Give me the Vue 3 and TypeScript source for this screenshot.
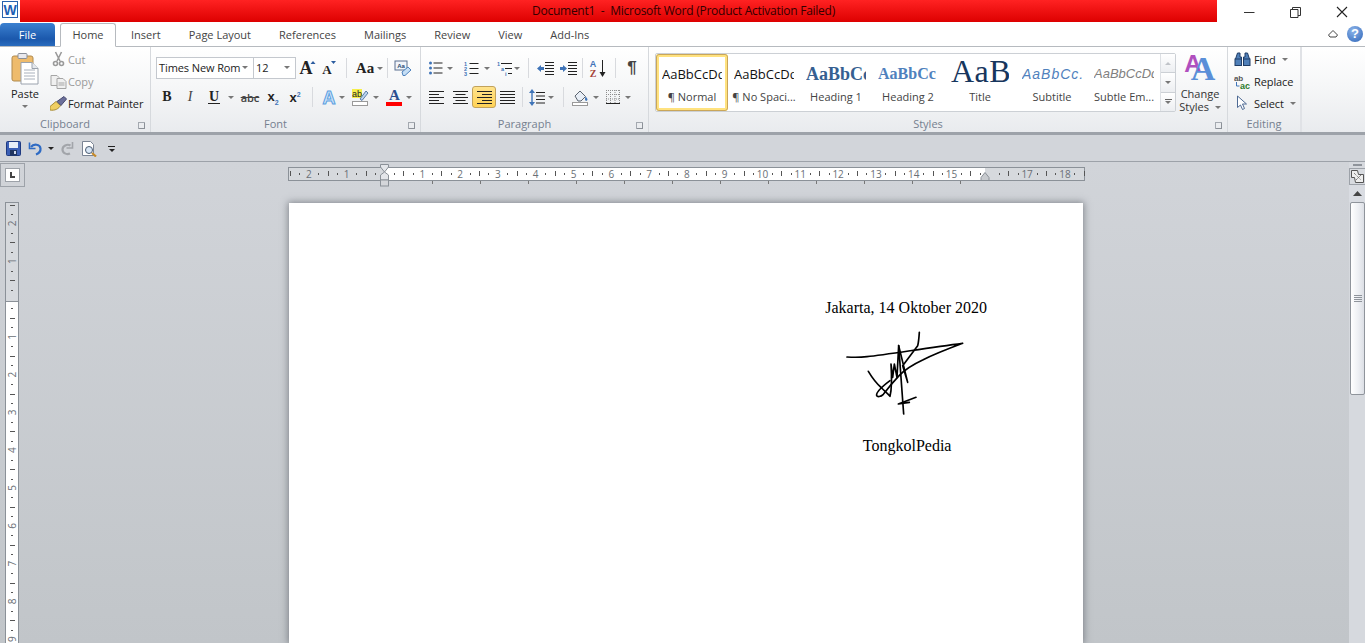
<script setup lang="ts">
// Word 2010 window: title bar, ribbon, quick access bar, rulers and the page.
const tabs = ['Insert', 'Page Layout', 'References', 'Mailings', 'Review', 'View', 'Add-Ins'];

const CM = 37.8;
const hLabels = [-2, -1, 1, 2, 3, 4, 5, 6, 7, 8, 9, 10, 11, 12, 13, 14, 15, 17, 18];
const vLabels = [-2, -1, 1, 2, 3, 4, 5, 6, 7, 8, 9];

// every quarter of a cm gets a dot, every half a longer tick
const hTicks: { x: number; long: boolean }[] = [];
for (let i = -10; i <= 74; i++) {
    if (i % 4 === 0) continue;
    hTicks.push({ x: 96.5 + (i * CM) / 4, long: i % 2 === 0 });
}
const vTicks: { y: number; long: boolean }[] = [];
for (let i = -10; i <= 38; i++) {
    if (i % 4 === 0) continue;
    vTicks.push({ y: 97 + (i * CM) / 4, long: i % 2 === 0 });
}
const tabStops = Array.from({ length: 12 }, (_, i) => 96 + 48 * (i + 1));

const gallery = [
    { cls: 'normal', sample: 'AaBbCcDd', name: '¶ Normal' },
    { cls: 'normal', sample: 'AaBbCcDd', name: '¶ No Spaci...' },
    { cls: 'h1', sample: 'AaBbCc', name: 'Heading 1' },
    { cls: 'h2', sample: 'AaBbCc', name: 'Heading 2' },
    { cls: 'title', sample: 'AaB', name: 'Title' },
    { cls: 'subtitle', sample: 'AaBbCc.', name: 'Subtitle' },
    { cls: 'subtle', sample: 'AaBbCcDd', name: 'Subtle Em...' },
];
</script>

<template>
    <div class="word">
        <header class="titlebar">
            <div class="app-icon">
                <svg width="18" height="20" viewBox="0 0 18 20">
                    <rect x="1.500" y="1.500" width="15" height="16" fill="#fff" stroke="#2a63ad" />
                    <text x="9" y="15" text-anchor="middle" class="w-glyph">W</text>
                </svg>
            </div>
            <div class="title-red">Document1&nbsp; - &nbsp;Microsoft Word (Product Activation Failed)</div>
            <div class="win-controls">
                <svg width="11" height="11" viewBox="0 0 11 11"><path d="M0 5.500h10.500" stroke="#333" /></svg>
                <svg width="11" height="11" viewBox="0 0 11 11" fill="none" stroke="#333"><path d="M.5 2.500h7.500v8H.5zM2.500 2.500v-2h8v8H8" /></svg>
                <svg width="12" height="12" viewBox="0 0 12 12"><path d="M1 1l10 10M11 1L1 11" stroke="#222" stroke-width="1.100" /></svg>
            </div>
        </header>

        <nav class="tabs">
            <div class="tab-file">File</div>
            <div class="tab-home">Home</div>
            <div v-for="t in tabs" :key="t" class="tab">{{ t }}</div>
            <div class="tab-right">
                <svg width="12" height="10" viewBox="0 0 12 10" fill="none" stroke="#444"><path d="M1.500 6L6 1.500 10.500 6 9 8H3z" /></svg>
                <div class="help">?</div>
            </div>
        </nav>

        <section class="ribbon">
            <!-- Clipboard -->
            <div class="group g-clip">
                <div class="clip-body">
                    <div class="paste">
                        <svg width="28" height="33" viewBox="0 0 28 33">
                            <rect x="1" y="4" width="21" height="25" rx="2" fill="#eebb6c" stroke="#b08a4e" />
                            <rect x="7" y="1.500" width="9" height="5" rx="1" fill="#e9e9ee" stroke="#8a8f99" />
                            <path d="M10 10.500h11l6 6v15.500H10z" fill="#fff" stroke="#9aa2ad" />
                            <path d="M21 10.500v6h6" fill="#e4e8ee" stroke="#9aa2ad" />
                            <path d="M13 18h11M13 21h11M13 24h11M13 27h11" stroke="#a8b0bc" />
                        </svg>
                        <span class="paste-label">Paste</span>
                        <i class="caret small"></i>
                    </div>
                    <div class="clip-list">
                        <div class="clip-row off">
                            <svg width="14" height="16" viewBox="0 0 14 16" fill="none" stroke="#9a9a9a" stroke-width="1.600"><path d="M4 1l4.500 9M10 1L5.500 10" /><circle cx="4" cy="12.500" r="2" /><circle cx="10" cy="12.500" r="2" /></svg>
                            <span>Cut</span>
                        </div>
                        <div class="clip-row off">
                            <svg width="16" height="15" viewBox="0 0 16 15" fill="#f0f0f0" stroke="#a5a5a5"><path d="M.5 1.500h6l2 2v8h-8z" /><path d="M6.500 4.500h6l3 3v7h-9z" /><path d="M8 9h6M8 11h6" /></svg>
                            <span>Copy</span>
                        </div>
                        <div class="clip-row">
                            <svg width="17" height="15" viewBox="0 0 17 15">
                                <path d="M0 10.500l6-5 4.500 4C9 12.500 5 15 0 14z" fill="#f0cf62" stroke="#a98d35" />
                                <path d="M7 5.500l7-5 2.500 2.500-5.500 6.500z" fill="#6b6f9a" stroke="#45486e" />
                            </svg>
                            <span>Format Painter</span>
                        </div>
                    </div>
                </div>
                <div class="group-label">Clipboard</div>
                <i class="launcher"></i>
            </div>

            <!-- Font -->
            <div class="group g-font">
                <div class="rows">
                    <div class="row">
                        <div class="combo w97"><span>Times New Rom</span><i class="caret"></i></div>
                        <div class="combo w43"><span>12</span><i class="caret"></i></div>
                        <div class="t w20 ml2">
                            <svg width="18" height="18" viewBox="0 0 18 18"><text x="7" y="15" text-anchor="middle" class="serif-b s17">A</text><path d="M11.500 5l2.500-3 2.500 3z" fill="#2b5c9f" /></svg>
                        </div>
                        <div class="t w20 ml1">
                            <svg width="18" height="18" viewBox="0 0 18 18"><text x="7" y="15" text-anchor="middle" class="serif-b s13">A</text><path d="M11 2h5l-2.500 3z" fill="#2b5c9f" /></svg>
                        </div>
                        <i class="sep ml7"></i>
                        <div class="t w20 ml8"><span class="serif-b aa">Aa</span></div>
                        <div class="t w10"><i class="caret"></i></div>
                        <i class="sep ml2"></i>
                        <div class="t w20 ml5">
                            <svg width="18" height="17" viewBox="0 0 18 17">
                                <rect x="1" y="1" width="12" height="9" fill="#f2f5fa" stroke="#5a6f8f" />
                                <text x="7" y="8" text-anchor="middle" class="mini-b">Aa</text>
                                <path d="M8 12l6-5 3 3-6 5.500H9z" fill="#c5def5" stroke="#4e82bd" />
                            </svg>
                        </div>
                    </div>
                    <div class="row">
                        <div class="t w22"><span class="serif-b fmt">B</span></div>
                        <div class="t w22 ml1"><span class="serif-i fmt">I</span></div>
                        <div class="t w22 ml2"><span class="serif-b fmt under">U</span></div>
                        <div class="t w12"><i class="caret"></i></div>
                        <div class="t w22 ml2"><span class="strike">abc</span></div>
                        <div class="t w22 ml1"><span class="script">x<sub>2</sub></span></div>
                        <div class="t w22"><span class="script">x<sup>2</sup></span></div>
                        <i class="sep ml6"></i>
                        <div class="t w18 ml7">
                            <svg width="18" height="18" viewBox="0 0 18 18"><text x="9" y="16" text-anchor="middle" class="glow">A</text></svg>
                        </div>
                        <div class="t w7"><i class="caret"></i></div>
                        <div class="t w18 ml6">
                            <svg width="17" height="18" viewBox="0 0 17 18">
                                <rect x="0" y="1" width="10" height="9" fill="#f5ee4a" />
                                <text x="5" y="9" text-anchor="middle" class="mini-ab">ab</text>
                                <path d="M8 11l6-8 2 2-6 7.500z" fill="#bcd4ef" stroke="#5a7ca8" />
                                <rect x=".5" y="13.500" width="15" height="4" fill="#fff" stroke="#9a9a9a" />
                            </svg>
                        </div>
                        <div class="t w14"><i class="caret"></i></div>
                        <div class="t w18 ml2">
                            <svg width="17" height="18" viewBox="0 0 17 18">
                                <text x="8.500" y="12" text-anchor="middle" class="blue-a">A</text>
                                <rect x="0" y="14" width="16" height="4" fill="#f00" />
                            </svg>
                        </div>
                        <div class="t w12"><i class="caret"></i></div>
                    </div>
                </div>
                <div class="group-label">Font</div>
                <i class="launcher"></i>
            </div>

            <!-- Paragraph -->
            <div class="group g-para">
                <div class="rows">
                    <div class="row">
                        <div class="t w22 ml4">
                            <svg width="14" height="14" viewBox="0 0 14 14"><path d="M4.500 2h9M4.500 7h9M4.500 12h9" stroke="#222" /><g fill="#3f74b8"><circle cx="1.500" cy="2" r="1.500" /><circle cx="1.500" cy="7" r="1.500" /><circle cx="1.500" cy="12" r="1.500" /></g></svg>
                        </div>
                        <div class="t w6"><i class="caret"></i></div>
                        <div class="t w22 ml7">
                            <svg width="15" height="15" viewBox="0 0 15 15"><path d="M5.500 2.500h9M5.500 7.500h9M5.500 12.500h9" stroke="#222" /><g class="mini-n"><text x="0" y="5">1</text><text x="0" y="10">2</text><text x="0" y="15">3</text></g></svg>
                        </div>
                        <div class="t w10"><i class="caret"></i></div>
                        <div class="t w18 ml4">
                            <svg width="16" height="15" viewBox="0 0 16 15"><path d="M4 2.500h11M8 7.500h7M11 12.500h4" stroke="#222" /><g class="mini-n"><text x="0" y="5">1</text><text x="4" y="10">a</text><text x="8" y="15">i</text></g></svg>
                        </div>
                        <div class="t w6"><i class="caret"></i></div>
                        <i class="sep ml8"></i>
                        <div class="t w20 ml6">
                            <svg width="17" height="15" viewBox="0 0 17 15"><path d="M8 1.500h9M8 4.500h9M8 7.500h9M8 10.500h9M8 13.500h9" stroke="#222" /><path d="M0 7.500l4-3.500v2h3v3H4v2z" fill="#3f74b8" /></svg>
                        </div>
                        <div class="t w20 ml3">
                            <svg width="17" height="15" viewBox="0 0 17 15"><path d="M8 1.500h9M8 4.500h9M8 7.500h9M8 10.500h9M8 13.500h9" stroke="#222" /><path d="M7 7.500L3 4v2H0v3h3v2z" fill="#3f74b8" /></svg>
                        </div>
                        <i class="sep ml4"></i>
                        <div class="t w22 ml4">
                            <svg width="20" height="19" viewBox="0 0 20 19"><text x="5" y="8" text-anchor="middle" class="az-a">A</text><text x="5" y="18" text-anchor="middle" class="az-z">Z</text><path d="M14.500 1v14" stroke="#222" /><path d="M11.500 13h6l-3 5z" fill="#222" /></svg>
                        </div>
                        <i class="sep ml6"></i>
                        <div class="t w22 ml5"><span class="pilcrow">¶</span></div>
                    </div>
                    <div class="row">
                        <div class="t w23 ml4"><svg width="15" height="13" viewBox="0 0 15 13"><path d="M0 .5h15M0 3.500h10M0 6.500h15M0 9.500h10M0 12.500h15" stroke="#222" /></svg></div>
                        <div class="t w23 ml1"><svg width="15" height="13" viewBox="0 0 15 13"><path d="M0 .5h15M2.500 3.500h10M0 6.500h15M2.500 9.500h10M0 12.500h15" stroke="#222" /></svg></div>
                        <div class="t w24 on"><svg width="15" height="13" viewBox="0 0 15 13"><path d="M0 .5h15M5 3.500h10M0 6.500h15M5 9.500h10M0 12.500h15" stroke="#222" /></svg></div>
                        <div class="t w23"><svg width="15" height="13" viewBox="0 0 15 13"><path d="M0 .5h15M0 3.500h15M0 6.500h15M0 9.500h15M0 12.500h15" stroke="#222" /></svg></div>
                        <i class="sep ml3"></i>
                        <div class="t w20 ml4">
                            <svg width="16" height="17" viewBox="0 0 16 17"><path d="M7 3.500h9M7 7h9M7 10.500h9M7 14h9" stroke="#222" /><path d="M3 0l3 4H0zM3 17l3-4H0z M2.300 4h1.400v9H2.300z" fill="#3f74b8" /></svg>
                        </div>
                        <div class="t w8"><i class="caret"></i></div>
                        <i class="sep ml8"></i>
                        <div class="t w22 ml5">
                            <svg width="17" height="17" viewBox="0 0 17 17">
                                <path d="M3 7l5-5 5.500 5.500-4.500 4.500H6z" fill="#e8eef6" stroke="#5b6470" />
                                <path d="M13.500 7.500c2 2 2.500 3 1.500 4s-2 0-2-1.500z" fill="#3f74b8" />
                                <rect x=".5" y="13.500" width="15" height="3" fill="#fff" stroke="#9a9a9a" />
                            </svg>
                        </div>
                        <div class="t w10"><i class="caret"></i></div>
                        <div class="t w20 ml2">
                            <svg width="14" height="14" viewBox="0 0 14 14"><path d="M.5 0v13M4.500 0v13M9 0v13M13.500 0v13M0 .5h14M0 4.500h14M0 9h14" stroke="#8d8d8d" stroke-dasharray="1 1" fill="none" /><path d="M0 13.500h14" stroke="#222" /></svg>
                        </div>
                        <div class="t w10"><i class="caret"></i></div>
                    </div>
                </div>
                <div class="group-label">Paragraph</div>
                <i class="launcher"></i>
            </div>

            <!-- Styles -->
            <div class="group g-styles">
                <div class="styles-body">
                    <div class="gallery">
                        <div v-for="(s, i) in gallery" :key="s.name" class="style-item" :class="{ selected: i === 0 }">
                            <div class="sample" :class="s.cls"><span>{{ s.sample }}</span></div>
                            <div class="style-name">{{ s.name }}</div>
                        </div>
                        <div class="gallery-scroll">
                            <div class="gs-btn"><i class="caret up dim"></i></div>
                            <div class="gs-btn"><i class="caret"></i></div>
                            <div class="gs-btn more"><b></b><i class="caret"></i></div>
                        </div>
                    </div>
                    <div class="change-styles">
                        <svg width="32" height="30" viewBox="0 0 32 30">
                            <text x="9" y="20" text-anchor="middle" class="cs-back">A</text>
                            <text x="19" y="28" text-anchor="middle" class="cs-front">A</text>
                        </svg>
                        <span>Change</span>
                        <span>Styles <i class="caret inline"></i></span>
                    </div>
                </div>
                <div class="group-label">Styles</div>
                <i class="launcher"></i>
            </div>

            <!-- Editing -->
            <div class="group g-edit">
                <div class="edit-list">
                    <div class="clip-row">
                        <svg width="16" height="14" viewBox="0 0 16 14" fill="#4f7fb8" stroke="#1f3d66"><path d="M1 7l2-6h2.500v4H7V7.500H1zM15 7l-2-6h-2.500v4H9V7.500h6z" /><rect x=".5" y="7" width="6.500" height="6.500" /><rect x="9" y="7" width="6.500" height="6.500" /></svg>
                        <span>Find</span><i class="caret inline"></i>
                    </div>
                    <div class="clip-row">
                        <svg width="17" height="15" viewBox="0 0 17 15"><text x="0" y="6.500" class="rep-a">ab</text><text x="6" y="14.500" class="rep-b">ac</text><path d="M2.500 8v4h3" fill="none" stroke="#3f74b8" /></svg>
                        <span>Replace</span>
                    </div>
                    <div class="clip-row">
                        <svg width="14" height="16" viewBox="0 0 14 16"><path d="M2 1v11.500l3-2.500 2 4.500 2-1-2-4.500h4z" fill="#fff" stroke="#4e6a94" /></svg>
                        <span>Select</span><i class="caret inline"></i>
                    </div>
                </div>
                <div class="group-label plain">Editing</div>
            </div>
        </section>

        <div class="qat">
            <svg width="15" height="15" viewBox="0 0 15 15">
                <rect x=".5" y=".5" width="14" height="14" rx="1" fill="#3b5fb5" stroke="#1f3a80" />
                <rect x="3" y="1" width="9" height="6" fill="#e8eef8" />
                <rect x="4" y="9" width="7" height="5.500" fill="#20345f" />
                <rect x="8" y="10" width="2" height="3" fill="#cfd8ea" />
            </svg>
            <svg class="q-undo" width="15" height="15" viewBox="0 0 15 15" fill="none" stroke="#2f6bc4" stroke-width="2.200"><path d="M3 6c2.500-3.500 9-3 9.500 1.500.3 3-2 5-4.500 6" /><path d="M1.500 1.500v6h6" stroke-width="1.600" /></svg>
            <i class="caret dark q-caret1"></i>
            <svg class="q-redo" width="13" height="15" viewBox="0 0 13 15" fill="none" stroke="#a2a5aa" stroke-width="2.200"><path d="M9.500 4.500C6 2.500 1.500 5 1.500 8.500s4 5.500 7.500 4" /><path d="M11.500 1v6h-6" stroke-width="1.600" /></svg>
            <svg class="q-prev" width="16" height="16" viewBox="0 0 16 16">
                <path d="M.5.500h8l3 3v11H.5z" fill="#fff" stroke="#7a8494" />
                <circle cx="7" cy="9" r="3.500" fill="#d8e6f5" stroke="#4a5a70" />
                <path d="M10 12l4 3.500" stroke="#c58a2a" stroke-width="2.200" />
            </svg>
            <span class="q-custom"><b></b><i class="caret dark"></i></span>
        </div>

        <main class="workspace">
            <div class="doc-area">
                <div class="ruler-row">
                    <div class="tab-stop">
                        <div class="tab-stop-in"><b></b></div>
                    </div>
                    <svg class="h-ruler" width="800" height="24" viewBox="0 0 800 24">
                        <rect x=".5" y="4.500" width="796" height="13" fill="#d6d9dd" stroke="#8b9198" />
                        <rect x="97" y="5" width="600" height="12" fill="#fff" />
                        <g fill="#555">
                            <rect v-for="t in hTicks" :key="t.x" :x="Math.round(t.x)" :y="t.long ? 8 : 10" width="1" :height="t.long ? 5 : 2" />
                        </g>
                        <text v-for="n in hLabels" :key="n" class="r-num" :x="96.5 + n * CM" y="14.500" text-anchor="middle">{{ Math.abs(n) }}</text>
                        <rect v-for="x in tabStops" :key="x" :x="x" y="18" width="1" height="3" fill="#777" />
                        <path d="M92.500 1.500h8V4l-4 5-4-5z" fill="#e4e6ea" stroke="#8b9198" />
                        <path d="M92.500 17v-5l4-3 4 3v5z" fill="#e4e6ea" stroke="#8b9198" />
                        <rect x="92.500" y="17" width="8" height="6" fill="#d4d6da" stroke="#8b9198" />
                        <path d="M693 17.500v-3l4-5 4 5v3z" fill="#c8cbcf" stroke="#8b9198" />
                    </svg>
                </div>
                <div class="doc-row">
                    <svg class="v-ruler" width="14" height="441" viewBox="0 0 14 441">
                        <rect x=".5" y=".5" width="13" height="445" fill="#fff" stroke="#8b9198" />
                        <rect x="1" y="1" width="12" height="98" fill="#d6d9dd" />
                        <path d="M0 99.500h14" stroke="#8b9198" />
                        <g fill="#555">
                            <rect v-for="t in vTicks" :key="t.y" :x="t.long ? 5 : 6" :y="Math.round(t.y)" :width="t.long ? 5 : 2" height="1" />
                        </g>
                        <text v-for="n in vLabels" :key="n" class="r-num" text-anchor="middle" :transform="`translate(10.500 ${97 + n * CM}) rotate(-90)`">{{ Math.abs(n) }}</text>
                    </svg>
                    <article class="page">
                        <div class="letter-end">
                            <p>Jakarta, 14 Oktober 2020</p>
                            <svg class="signature" width="130" height="90" viewBox="90 114 390 270" fill="none" stroke="#000" stroke-width="5" stroke-linecap="round" stroke-linejoin="round">
                                <path d="M108 204c20 1 40 1 60-1 60-6 170-25 287-40-40 15-80 30-120 50-30 14-52 28-70 46-18 19-35 40-48 57-8 8-18 8-20 4-2-8 12-24 40-45" />
                                <path d="M172 247c12 20 26 38 40 50 10 10 20 18 25 25 5-20 6-50 3-97l5 40 5-40 8 40 5-95 15 205" />
                                <path d="M263 170l27 110-15-50 45-60c3-10 4-25 5-40" />
                                <path d="M262 345l53-20M262 345l33-5" />
                            </svg>
                            <p class="signer">TongkolPedia</p>
                        </div>
                    </article>
                </div>
            </div>
            <aside class="vscroll">
                <div class="split"><b></b></div>
                <div class="view-btn">
                    <svg width="13" height="13" viewBox="0 0 13 13" fill="#eee" stroke="#555"><path d="M.5.500h6l1 4h5v8h-8l-1-5h-3z" /><path d="M3 3l7 7M10 5L5 10" stroke-dasharray="1 1" /></svg>
                </div>
                <div class="sb-up"><svg width="9" height="5" viewBox="0 0 9 5"><path d="M0 5l4.500-5L9 5z" fill="#444" /></svg></div>
                <div class="thumb"><b></b><b></b><b></b><b></b></div>
            </aside>
        </main>
    </div>
</template>

<style>
html, body { margin: 0; overflow: hidden; }
</style>

<style scoped>
.word {
    width: 1365px;
    height: 643px;
    overflow: hidden;
    display: flex;
    flex-direction: column;
    font-family: "Open Sans", "Noto Sans", sans-serif;
    font-size: 11px;
    color: #333;
    background: #fff;
}

/* title bar */
.titlebar { display: flex; height: 22px; flex: none; }
.app-icon { width: 20px; padding-left: 1px; box-sizing: border-box; }
.w-glyph { font: bold 14px "Liberation Sans", sans-serif; fill: #1e5fb4; }
.title-red {
    width: 1197px;
    box-sizing: border-box;
    padding-left: 130px;
    background: linear-gradient(#ff2222, #dd0000);
    text-align: center;
    line-height: 21px;
    font-size: 12px;
    letter-spacing: -0.25px;
    color: #300;
}
.win-controls { flex: 1; display: flex; align-items: center; gap: 35px; padding: 0 0 0 27px; height: 24px; }

/* tabs */
.tabs { display: flex; height: 24px; flex: none; border-bottom: 1px solid #b6babf; box-sizing: content-box; }
.tab-file {
    width: 55px;
    height: 23px;
    margin-top: 1px;
    border-radius: 4px 4px 0 0;
    background: linear-gradient(#3b80d0, #1b58ac 70%, #2a6cbe);
    color: #fff;
    text-align: center;
    line-height: 23px;
}
.tab-home {
    width: 56px;
    height: 24px;
    margin: 1px 1px 0 5px;
    box-sizing: border-box;
    background: #fff;
    border: 1px solid #b6babf;
    border-bottom: 1px solid #fff;
    border-radius: 3px 3px 0 0;
    text-align: center;
    line-height: 22px;
    color: #444;
}
.tab { padding: 0 14px; line-height: 25px; color: #444; white-space: nowrap; }
.tab-right { margin-left: auto; display: flex; align-items: center; gap: 8px; padding-right: 2px; }
.help {
    width: 16px;
    height: 16px;
    border-radius: 50%;
    background: radial-gradient(circle at 40% 30%, #8db5ea, #2d64b8);
    color: #fff;
    font: bold 13px/16px "Liberation Sans", sans-serif;
    text-align: center;
}

/* ribbon */
.ribbon {
    display: flex;
    height: 85px;
    flex: none;
    background: linear-gradient(#fff, #f6f7f8 45%, #e9ebee);
    border-bottom: 3px solid #9da2a9;
    box-sizing: content-box;
}
.group { position: relative; display: flex; flex-direction: column; border-right: 1px solid #d6d9dd; box-sizing: border-box; height: 85px; }
.group-label { position: absolute; left: 0; right: 20px; bottom: 0; text-align: center; color: #75808f; line-height: 16px; }
.group-label.plain { right: 0; }
.launcher {
    position: absolute;
    right: 5px;
    bottom: 3px;
    width: 6px;
    height: 6px;
    border: 1px solid #a4a9b0;
    border-width: 1px 0 0 1px;
    box-shadow: inset -2px -2px 0 -1px #8b9097;
}
.g-clip { width: 151px; }
.g-font { width: 270px; padding-left: 5px; }
.g-para { width: 228px; }
.g-styles { width: 579px; padding-left: 6px; }
.g-edit { width: 74px; border-right: 2px solid #e0e2e6; }

.clip-body { display: flex; padding-top: 1px; }
.paste { width: 50px; display: flex; flex-direction: column; align-items: center; padding-top: 4px; box-sizing: border-box; }
.paste-label { margin-top: 1px; line-height: 15px; color: #222; }
.clip-list { display: flex; flex-direction: column; }
.clip-row { display: flex; align-items: center; height: 22px; gap: 1px; color: #222; white-space: nowrap; letter-spacing: -0.1px; }
.clip-row svg { width: 17px; flex: none; }
.clip-row.off { color: #9a9a9a; }

.rows { display: flex; flex-direction: column; gap: 7px; padding-top: 10px; }
.row { display: flex; height: 22px; align-items: center; }
.t { display: flex; align-items: center; justify-content: center; height: 22px; flex: none; box-sizing: border-box; }
.t.on { background: linear-gradient(#ffe38c, #ffd255); border: 1px solid #c2a25a; border-radius: 3px; }
.w6 { width: 6px; } .w7 { width: 7px; } .w8 { width: 8px; } .w10 { width: 10px; }
.w12 { width: 12px; } .w14 { width: 14px; } .w18 { width: 18px; } .w20 { width: 20px; }
.w22 { width: 22px; } .w23 { width: 23px; } .w24 { width: 24px; }
.ml1 { margin-left: 1px; } .ml2 { margin-left: 2px; } .ml3 { margin-left: 3px; } .ml4 { margin-left: 4px; }
.ml5 { margin-left: 5px; } .ml6 { margin-left: 6px; } .ml7 { margin-left: 7px; } .ml8 { margin-left: 8px; }
.sep { width: 1px; height: 20px; background: #d8dade; flex: none; }

.caret {
    display: block;
    width: 0;
    height: 0;
    border-left: 3px solid transparent;
    border-right: 3px solid transparent;
    border-top: 3px solid #777;
}
.caret.small { margin-top: 4px; }
.caret.inline { display: inline-block; vertical-align: 2px; margin-left: 3px; }
.caret.up { border-top: 0; border-bottom: 3px solid #777; }
.caret.dim { border-bottom-color: #c0c3c8; }
.caret.dark { border-top-color: #222; }

.combo {
    display: flex;
    align-items: center;
    justify-content: space-between;
    height: 22px;
    box-sizing: border-box;
    padding: 0 5px 1px 2px;
    background: #fff;
    border: 1px solid #c4c8ce;
    color: #222;
    flex: none;
    white-space: nowrap;
    letter-spacing: -0.1px;
}
.combo + .combo { margin-left: -1px; }
.w97 { width: 98px; }
.w43 { width: 43px; }

.serif-b { font-family: "Liberation Serif", serif; font-weight: bold; color: #222; fill: #222; }
.serif-i { font-family: "Liberation Serif", serif; font-style: italic; color: #444; }
.s17 { font-size: 18px; }
.s13 { font-size: 13px; }
.aa { font-size: 15px; }
.fmt { font-size: 14px; line-height: 14px; }
.under { border-bottom: 1px solid #222; line-height: 12px; padding: 0 1px; }
.strike { font-size: 11px; color: #444; text-decoration: line-through; font-weight: 600; }
.script { font: bold 13px "Liberation Sans", sans-serif; color: #222; }
.script sub, .script sup { font-size: 7px; color: #3f74b8; }
.mini-b { font: bold 6px "Liberation Sans", sans-serif; fill: #2b4a75; }
.mini-ab { font: 9px "Liberation Sans", sans-serif; fill: #222; }
.mini-n { font: bold 5.500px "Liberation Sans", sans-serif; fill: #3f74b8; }
.glow { font: bold 18px "Liberation Sans", sans-serif; fill: #cfe4fa; stroke: #5ba0e0; stroke-width: 1; }
.blue-a { font: bold 15px "Liberation Serif", serif; fill: #2b4f8f; }
.az-a { font: bold 9px "Liberation Sans", sans-serif; fill: #3f74b8; }
.az-z { font: bold 10px "Liberation Serif", serif; fill: #a5423a; }
.pilcrow { font: bold 17px "Liberation Sans", sans-serif; color: #444; }

/* style gallery */
.styles-body { display: flex; }
.gallery {
    display: flex;
    width: 521px;
    height: 59px;
    margin-top: 6px;
    box-sizing: border-box;
    border: 1px solid #ccd0d5;
    border-radius: 2px;
    background: #fff;
}
.style-item { width: 72px; height: 57px; box-sizing: border-box; flex: none; text-align: center; padding: 2px 0 0; }
.style-item.selected {
    border: 3px solid #ffe27f;
    outline: 1px solid #c9a65a;
    outline-offset: -1px;
    border-radius: 3px;
    padding-top: 0;
}
.sample { height: 34px; width: 60px; margin: 0 auto; overflow: hidden; line-height: 36px; white-space: nowrap; text-align: left; color: #111; }
.selected .sample { height: 33px; line-height: 34px; }
.style-name { line-height: 14px; color: #444; white-space: nowrap; }
.sample.normal { font-size: 13px; }
.sample.h1 { font: bold 18px/36px "Liberation Serif", serif; color: #365f91; }
.sample.h2 { font: bold 16px/36px "Liberation Serif", serif; color: #4f81bd; }
.sample.title { font: 32px/22px "Liberation Serif", serif; color: #17365d; height: 30px; margin-top: 4px; width: 58px; letter-spacing: 0.5px; }
.sample.subtitle { font: italic 14px/36px "Liberation Sans", sans-serif; color: #4f81bd; letter-spacing: 1px; }
.sample.subtle { font: italic 13px/36px "Liberation Sans", sans-serif; color: #808080; }
.gallery-scroll { margin-left: auto; width: 15px; display: flex; flex-direction: column; border-left: 1px solid #dde0e4; }
.gs-btn { flex: 1; display: flex; flex-direction: column; align-items: center; justify-content: center; gap: 1px; background: linear-gradient(#fff, #eceef1); border-bottom: 1px solid #ccd0d5; }
.gs-btn:last-child { border-bottom: 0; }
.gs-btn b { width: 7px; height: 1px; background: #666; }
.change-styles { display: flex; flex-direction: column; align-items: center; width: 48px; padding-top: 5px; line-height: 13px; color: #333; }
.change-styles svg { margin-bottom: 5px; }
.cs-back { font: bold 24px "Liberation Sans", sans-serif; fill: #b04fbe; }
.cs-front { font: bold 34px "Liberation Serif", serif; fill: #5a8fd8; }
.edit-list { padding: 1px 0 0 6px; }
.edit-list .clip-row { gap: 3px; }
.rep-a { font: bold 8px "Liberation Sans", sans-serif; fill: #555; }
.rep-b { font: bold 9px "Liberation Sans", sans-serif; fill: #2a7a2a; }

/* quick access */
.qat {
    display: flex;
    align-items: center;
    height: 25px;
    flex: none;
    padding: 1px 0 0 6px;
    background: #d2d5da;
    border-bottom: 1px solid #9da2a9;
    box-sizing: content-box;
}
.q-undo { margin-left: 7px; }
.q-caret1 { margin-left: 5px; }
.q-redo { margin-left: 7px; }
.q-prev { margin-left: 8px; }
.q-custom { display: flex; flex-direction: column; gap: 2px; align-items: center; margin-left: 10px; }
.q-custom b { width: 7px; height: 1px; background: #222; }
.q-custom .caret { border-left-width: 3.500px; border-right-width: 3.500px; border-top-width: 3.500px; }

/* doc area */
.workspace { flex: 1; display: flex; min-height: 0; background: linear-gradient(#d1d4d9, #c1c5c9); }
.doc-area { width: 1349px; flex: none; display: flex; flex-direction: column; }
.ruler-row { display: flex; height: 40px; flex: none; padding-top: 1px; box-sizing: border-box; }
.tab-stop { width: 25px; height: 24px; box-sizing: border-box; border: 1px solid #9da2a9; padding: 4px; }
.tab-stop-in { width: 15px; height: 14px; box-sizing: border-box; background: #fff; border: 1px solid #9da2a9; position: relative; }
.tab-stop-in b { position: absolute; left: 4px; top: 3px; width: 5px; height: 6px; border-left: 2px solid #444; border-bottom: 2px solid #444; box-sizing: border-box; }
.h-ruler { margin-left: 263px; display: block; }
.r-num { font: 10px "Open Sans", sans-serif; fill: #6a6f76; }
.doc-row { display: flex; flex: 1; min-height: 0; }
.v-ruler { margin-left: 5px; flex: none; display: block; }
.page {
    width: 794px;
    margin: 1px 0 0 270px;
    padding: 96px 96px 0 0;
    box-sizing: border-box;
    background: #fff;
    box-shadow: 0 0 7px 1px rgba(70, 74, 82, 0.55);
    font: 16px/18px "Liberation Serif", serif;
    color: #000;
}
.letter-end { width: fit-content; margin-left: auto; text-align: center; }
.letter-end p { margin: 0; }
.letter-end .signer { padding-left: 2px; }
.signature { display: block; margin: 10px auto 20px; }

/* scrollbar */
.vscroll { flex: 1; display: flex; flex-direction: column; background: #d6d9de; }
.split { height: 6px; display: flex; justify-content: center; align-items: center; }
.split b { width: 9px; height: 2px; background: #8f949b; }
.view-btn { height: 17px; display: flex; align-items: center; justify-content: center; background: #d8dbe0; border: 1px solid #9da2a9; border-right: 0; box-sizing: border-box; }
.sb-up { height: 17px; display: flex; align-items: center; justify-content: center; background: #d9dce2; }
.thumb {
    width: 15px;
    height: 193px;
    margin-left: 1px;
    box-sizing: border-box;
    border: 1px solid #8f949b;
    border-radius: 2px;
    background: linear-gradient(90deg, #fff, #eceef2 60%, #dcdfe5);
    display: flex;
    flex-direction: column;
    align-items: center;
    justify-content: center;
    gap: 1px;
}
.thumb b { width: 8px; height: 1px; background: #8f949b; }
</style>
